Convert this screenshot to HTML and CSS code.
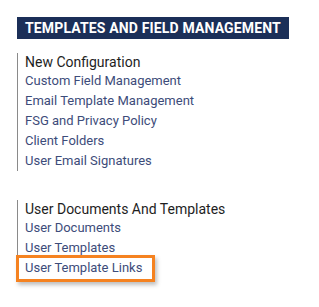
FILE: index.html
```html
<!DOCTYPE html>
<html>
<head>
<meta charset="utf-8">
<link rel="stylesheet" href="styles.css">
</head>
<body>
<div class="page">
  <h2 class="title">TEMPLATES AND FIELD MANAGEMENT</h2>
  <div class="section">
    <div class="heading">New Configuration</div>
    <a class="link">Custom Field Management</a>
    <a class="link">Email Template Management</a>
    <a class="link">FSG and Privacy Policy</a>
    <a class="link">Client Folders</a>
    <a class="link">User Email Signatures</a>
  </div>
  <div class="section second">
    <div class="heading">User Documents And Templates</div>
    <a class="link">User Documents</a>
    <a class="link">User Templates</a>
    <a class="link"><span class="highlight">User Template Links</span></a>
  </div>
</div>
</body>
</html>
```
FILE: styles.css
```css
html, body {
  margin: 0;
  padding: 0;
  background: #ffffff;
}
.page {
  padding: 17px 0 20px 17px;
  font-family: Roboto, "Noto Sans", sans-serif;
}
.title {
  margin: 0;
  width: 264px;
  height: 22px;
  line-height: 22px;
  padding-left: 8px;
  background: #1b2f58;
  color: #ffffff;
  font-size: 14px;
  font-weight: 700;
  letter-spacing: 0.15px;
}
.section {
  margin-top: 14px;
  border-left: 1px solid #8a8a8a;
  padding-left: 7px;
  display: flex;
  flex-direction: column;
}
.section.second {
  margin-top: 29px;
}
.heading {
  height: 18px;
  line-height: 18px;
  font-size: 14px;
  color: #1e1e1e;
}
.link {
  height: 20px;
  line-height: 20px;
  font-size: 13px;
  color: #3d4c7a;
  text-decoration: none;
}
.highlight {
  position: relative;
  display: inline-block;
}
.highlight::after {
  content: "";
  position: absolute;
  left: -9px;
  right: -13px;
  top: -3px;
  bottom: -4px;
  border: 3px solid #f58220;
  box-shadow: 2px 3px 4px rgba(0, 0, 0, 0.25);
}
```
